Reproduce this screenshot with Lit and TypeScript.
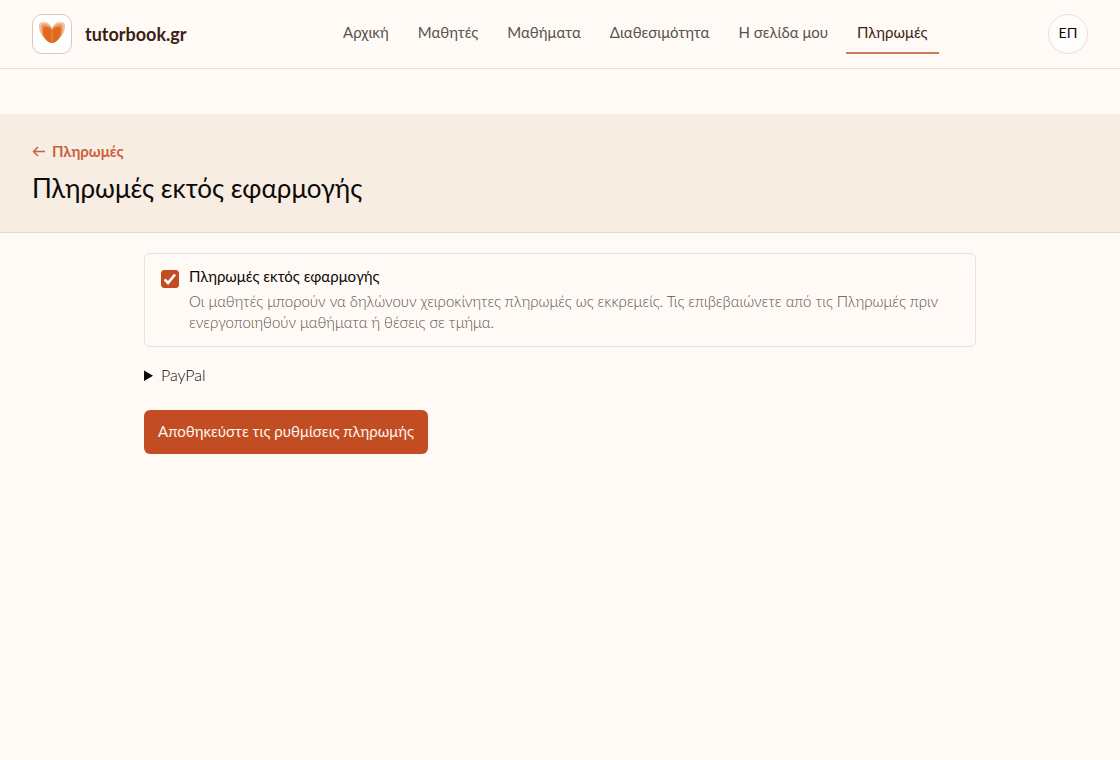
import { LitElement, html, css } from "lit";
import { customElement, state } from "lit/decorators.js";

@customElement("app-root")
export class AppRoot extends LitElement {
  static styles = css`
    :host {
      display: block;
      min-height: 100vh;
      background: #fffaf5;
      color: #0c0a09;
      font-family: "Lato", "Noto Sans", sans-serif;
      font-size: 16px;
      line-height: 24px;
    }
    * { box-sizing: border-box; }
    a { color: inherit; text-decoration: none; }
    .topbar {
      display: flex;
      align-items: center;
      justify-content: space-between;
      height: 69px;
      padding: 0 32px;
      border-bottom: 1px solid #e7e0dc;
    }
    .brand { display: flex; align-items: center; gap: 13px; font-size: 18px; font-weight: 700; color: #3b1f14; }
    .logo { width: 40px; height: 40px; display: block; }
    .nav { display: flex; gap: 7px; padding-left: 36px; font-size: 15px; color: #57534e; }
    .nav a { padding: 6px 11px 8px; border-bottom: 2px solid transparent; }
    .nav a.active { color: #3b1f14; border-bottom-color: #d07a5f; }
    .avatar {
      width: 40px;
      height: 40px;
      padding: 0 0 2px;
      border: 1px solid #e7e0dc;
      border-radius: 50%;
      background: #fffdfb;
      color: #0c0a09;
      font: inherit;
      font-size: 14px;
    }
    .hero { margin-top: 45px; padding: 25px 32px 27px; background: #f7ede2; border-bottom: 1px solid #e6d9cc; }
    .back { display: inline-flex; align-items: center; gap: 6px; font-size: 15px; font-weight: 700; color: #cb6140; }
    .back svg { width: 14px; height: 14px; }
    h1 { margin: 7px 0 0; font-size: 26px; line-height: 34px; font-weight: 400; }
    .content { max-width: 896px; margin: 0 auto; padding: 20px 32px; }
    .card { display: flex; gap: 10px; padding: 12px 16px 13px; border: 1px solid #e5e2df; border-radius: 6px; }
    .check {
      appearance: none;
      flex: none;
      width: 18px;
      height: 18px;
      margin: 4px 0 0;
      border-radius: 3px;
      border: 1px solid #c24d23;
      background: #fffaf5;
    }
    .check:checked {
      background: #c24d23 url("data:image/svg+xml,%3Csvg xmlns='http://www.w3.org/2000/svg' viewBox='0 0 16 16'%3E%3Cpath d='M2.600 8.400l3.400 3.600L13 3.500' fill='none' stroke='white' stroke-width='2.6'/%3E%3C/svg%3E") center / 16px no-repeat;
    }
    .label { display: block; font-size: 15px; line-height: 21px; }
    .hint { margin: 4px 0 0; font-size: 15px; line-height: 21px; font-weight: 300; color: #57504b; }
    details { margin-top: 16px; }
    summary { font-weight: 300; }
    .save {
      height: 44px;
      margin-top: 23px;
      padding: 0 14px 2px;
      border: 0;
      border-radius: 6px;
      background: #c24d23;
      color: #fff5ec;
      font: inherit;
      font-size: 15px;
    }
  `;

  @state() private enabled = true;

  private links = ["Αρχική", "Μαθητές", "Μαθήματα", "Διαθεσιμότητα", "Η σελίδα μου", "Πληρωμές"];

  render() {
    return html`
      <header class="topbar">
        <a class="brand" href="#">
          <svg class="logo" viewBox="0 0 40 40" aria-hidden="true">
            <rect x=".5" y=".5" width="39" height="39" rx="9.5" fill="#fff" stroke="#dfc6bc" />
            <path d="M20 14C18 9 14 7.500 10.500 8 7.500 8.300 7 10 7 12c0 7 4 14 13 15 9-1 13-8 13-15 0-2-.5-3.700-3.500-4C26 7.500 22 9 20 14z" fill="#f3c3a3" />
            <path d="M20 15c-1.500-3-5-5-8-4.700-2.500.2-3 1.500-3 3.200C9 21 12.500 27 20 28.300 27.500 27 31 21 31 13.500c0-1.700-.5-3-3-3.200-3-.3-6.500 1.700-8 4.700z" fill="#ea985f" />
            <path d="M20 16c-1.500-2-4-3.300-6.500-3.200-1.800.1-2.500 1.200-2.500 2.700C11 22 14 29 20 29s9-7 9-13.500c0-1.500-.7-2.600-2.500-2.700C24 12.700 21.500 14 20 16z" fill="#e06a1b" />
            <path d="M20 15v13" stroke="#f0a068" stroke-width=".7" />
          </svg>
          <span>tutorbook.gr</span>
        </a>
        <nav class="nav">
          ${this.links.map((l) => html`<a href="#" class=${l === "Πληρωμές" ? "active" : ""}>${l}</a>`)}
        </nav>
        <button class="avatar">ΕΠ</button>
      </header>
      <section class="hero">
        <a class="back" href="#">
          <svg viewBox="0 0 14 14" fill="none" stroke="currentColor" stroke-width="1.5" aria-hidden="true">
            <path d="M13 7.500H2M6 3L1.500 7.500 6 12" />
          </svg>
          <span>Πληρωμές</span>
        </a>
        <h1>Πληρωμές εκτός εφαρμογής</h1>
      </section>
      <main class="content">
        <div class="card">
          <input class="check" id="external" type="checkbox" .checked=${this.enabled}
            @change=${(e: Event) => (this.enabled = (e.target as HTMLInputElement).checked)} />
          <div>
            <label class="label" for="external">Πληρωμές εκτός εφαρμογής</label>
            <p class="hint">Οι μαθητές μπορούν να δηλώνουν χειροκίνητες πληρωμές ως εκκρεμείς. Τις επιβεβαιώνετε από τις Πληρωμές πριν ενεργοποιηθούν μαθήματα ή θέσεις σε τμήμα.</p>
          </div>
        </div>
        <details><summary>PayPal</summary></details>
        <button class="save">Αποθηκεύστε τις ρυθμίσεις πληρωμής</button>
      </main>
    `;
  }
}
